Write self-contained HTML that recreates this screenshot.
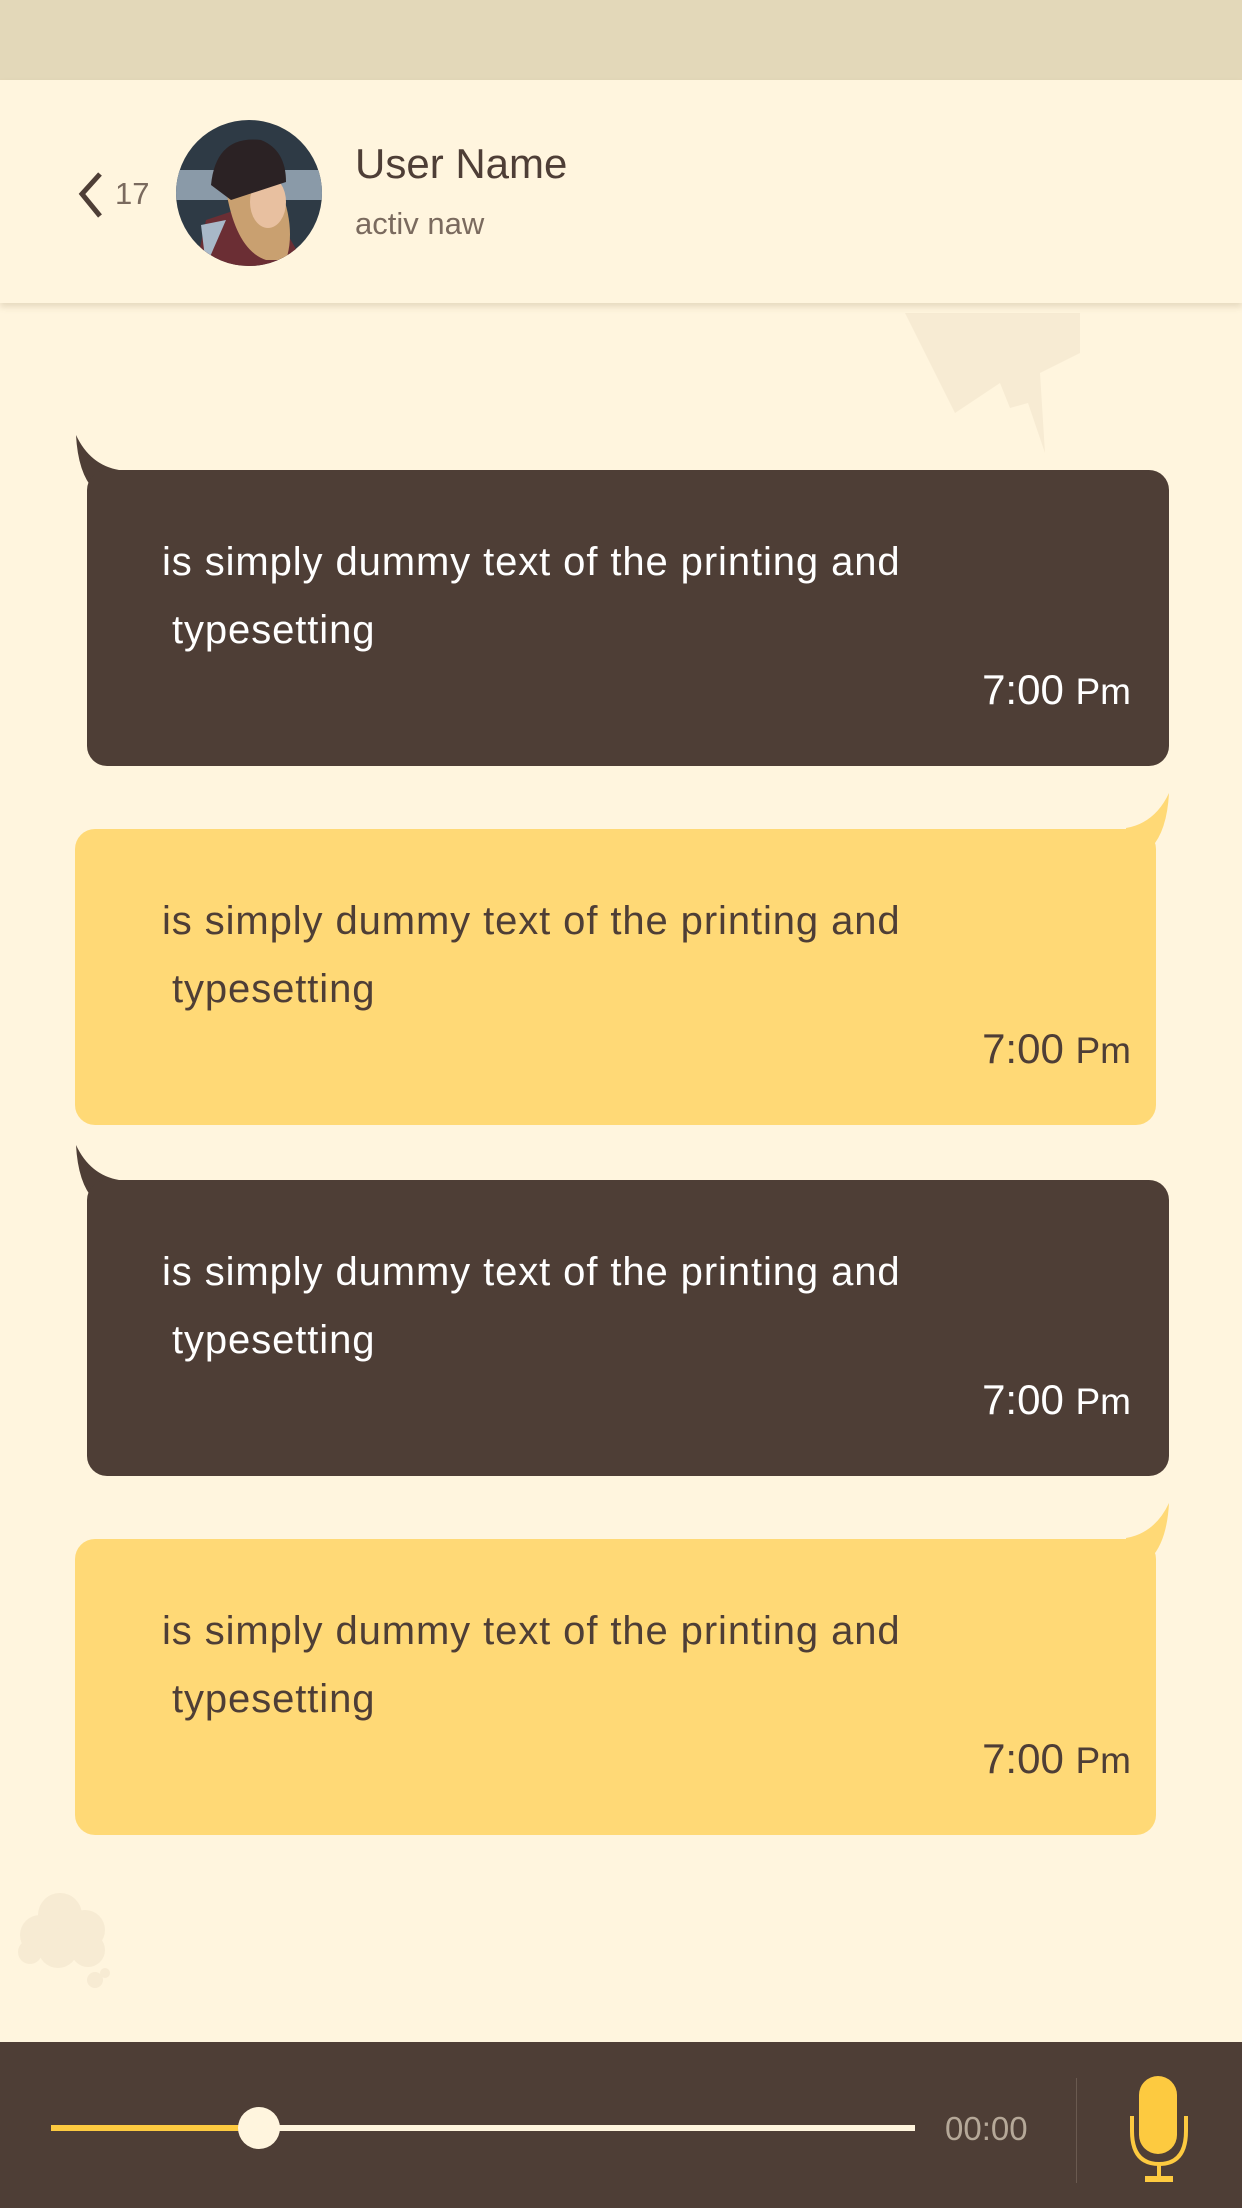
<!DOCTYPE html>
<html><head><meta charset="utf-8"><style>
*{margin:0;padding:0;box-sizing:border-box}
body{width:1242px;height:2208px;background:#fff5de;font-family:"Liberation Sans",sans-serif;position:relative;overflow:hidden}
.status{position:absolute;left:0;top:0;width:1242px;height:80px;background:#e3d8b9}
.header{position:absolute;left:0;top:80px;width:1242px;height:223px;background:#fff5de;box-shadow:0 4px 6px rgba(120,100,60,0.18);z-index:2}
.bubble{position:absolute;border-radius:20px;height:296px}
.dark{background:#4e3e36;color:#fff;left:87px;width:1082px}
.yel{background:#ffd976;color:#4e3e36;left:75px;width:1081px}
.l1{position:absolute;top:70px;font-size:40px;letter-spacing:0.9px;white-space:nowrap}
.l2{position:absolute;top:138px;font-size:40px;letter-spacing:0.9px}
.dark .l1{left:75px}.dark .l2{left:85px}
.yel .l1{left:87px}.yel .l2{left:97px}
.t{position:absolute;top:196px;font-size:42px;white-space:nowrap}
.dark .t{right:38px}.yel .t{right:25px}
.t span{font-size:37px}
.bar{position:absolute;left:0;top:2042px;width:1242px;height:166px;background:#4e3e36}
</style></head><body>
<div class="status"></div>
<div class="header">
<svg style="position:absolute;left:72px;top:90px" width="36" height="50"><path d="M28 4 L10 24 L28 46" stroke="#4e3e36" stroke-width="5" fill="none"/></svg>
<div style="position:absolute;left:115px;top:96px;font-size:31px;color:#7a6a5e">17</div>
<svg style="position:absolute;left:176px;top:40px" width="146" height="146">
<defs><clipPath id="c"><circle cx="73" cy="73" r="73"/></clipPath></defs>
<g clip-path="url(#c)"><rect width="146" height="146" fill="#2e3a45"/><rect y="50" width="146" height="30" fill="#8a9aa8"/>
<path d="M20 146 L30 100 L60 90 L100 95 L130 146Z" fill="#6b2e34"/>
<path d="M30 146 L25 105 L50 100 Z" fill="#a8b8c8"/>
<path d="M50 70 Q60 130 90 140 L110 140 Q120 110 105 70Z" fill="#c9a070"/>
<ellipse cx="92" cy="82" rx="18" ry="26" fill="#e8c0a0"/>
<path d="M35 65 Q40 15 85 20 Q110 30 110 62 L55 80Z" fill="#2b2224"/></g></svg>
<div style="position:absolute;left:355px;top:60px;font-size:42px;color:#4e3e36">User Name</div>
<div style="position:absolute;left:355px;top:126px;font-size:31px;color:#7a6a5e">activ naw</div>
</div>
<svg style="position:absolute;left:900px;top:303px" width="190" height="150"><path d="M5 10 L180 10 L180 50 L140 70 L145 150 L128 100 L110 105 L100 80 L55 110Z" fill="#f7ebd3"/></svg>
<svg style="position:absolute;left:10px;top:1880px" width="110" height="120"><g fill="#f7ebd3"><circle cx="50" cy="35" r="22"/><circle cx="75" cy="50" r="20"/><circle cx="30" cy="55" r="20"/><circle cx="48" cy="68" r="20"/><circle cx="78" cy="70" r="17"/><circle cx="20" cy="72" r="12"/><circle cx="85" cy="100" r="8"/><circle cx="95" cy="93" r="5"/></g></svg>

<svg style="position:absolute;left:74px;top:433px" width="50" height="60"><path d="M2 2 Q4 40 20 57 L45 57 L45 37 Q16 32 2 2Z" fill="#4e3e36"/></svg>
<div class="bubble dark" style="top:470px"><div class="l1">is simply dummy text of the printing and</div><div class="l2">typesetting</div><div class="t">7:00 <span>Pm</span></div></div>

<svg style="position:absolute;left:1121px;top:791px" width="50" height="60"><path d="M48 2 Q46 40 30 57 L5 57 L5 37 Q34 32 48 2Z" fill="#ffd976"/></svg>
<div class="bubble yel" style="top:829px"><div class="l1">is simply dummy text of the printing and</div><div class="l2">typesetting</div><div class="t">7:00 <span>Pm</span></div></div>

<svg style="position:absolute;left:74px;top:1143px" width="50" height="60"><path d="M2 2 Q4 40 20 57 L45 57 L45 37 Q16 32 2 2Z" fill="#4e3e36"/></svg>
<div class="bubble dark" style="top:1180px"><div class="l1">is simply dummy text of the printing and</div><div class="l2">typesetting</div><div class="t">7:00 <span>Pm</span></div></div>

<svg style="position:absolute;left:1121px;top:1501px" width="50" height="60"><path d="M48 2 Q46 40 30 57 L5 57 L5 37 Q34 32 48 2Z" fill="#ffd976"/></svg>
<div class="bubble yel" style="top:1539px"><div class="l1">is simply dummy text of the printing and</div><div class="l2">typesetting</div><div class="t">7:00 <span>Pm</span></div></div>

<div class="bar">
<div style="position:absolute;left:51px;top:83px;width:864px;height:6px;background:#fff5de"></div>
<div style="position:absolute;left:51px;top:83px;width:208px;height:6px;background:#fdca40"></div>
<div style="position:absolute;left:238px;top:65px;width:42px;height:42px;border-radius:50%;background:#fff5de"></div>
<div style="position:absolute;left:945px;top:68px;font-size:33px;color:#b5a898">00:00</div>
<div style="position:absolute;left:1076px;top:36px;width:1px;height:105px;background:#6a5a50"></div>
<svg style="position:absolute;left:1128px;top:34px" width="62" height="108"><rect x="11" y="0" width="38" height="78" rx="19" fill="#fdca40"/><path d="M4 40 L4 55 Q4 88 31 88 Q58 88 58 55 L58 40" stroke="#fdca40" stroke-width="4" fill="none"/><rect x="29" y="88" width="4" height="14" fill="#fdca40"/><rect x="17" y="100" width="28" height="6" fill="#fdca40"/></svg>
</div>
</body></html>
